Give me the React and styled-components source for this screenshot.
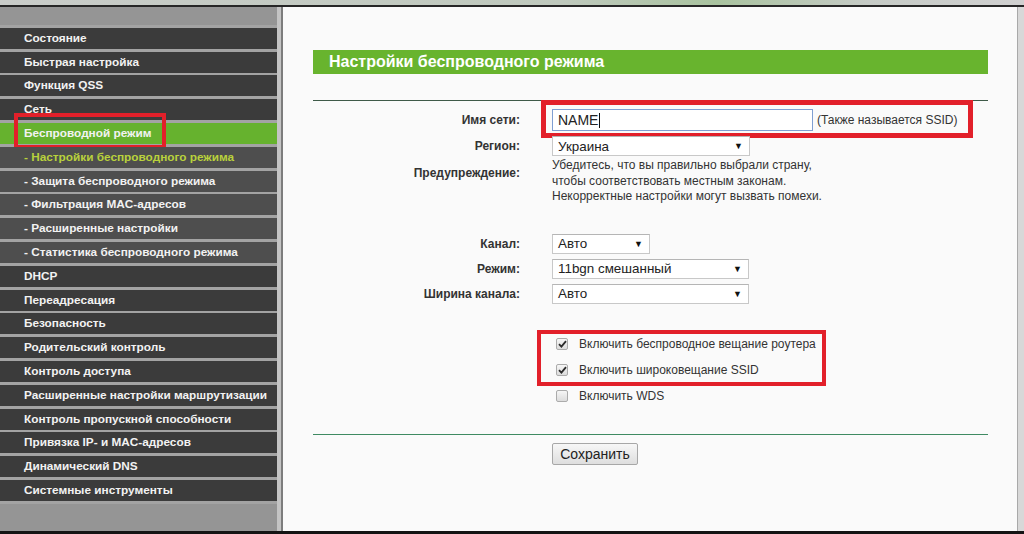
import React from 'react';
import styled, { createGlobalStyle } from 'styled-components';

const GlobalStyle = createGlobalStyle`
  html, body {
    margin: 0;
    padding: 0;
    width: 1024px;
    height: 534px;
    overflow: hidden;
    background: #fafafa;
    font-family: "Liberation Sans", Arial, sans-serif;
  }
`;

const Frame = styled.div`
  display: flex;
  flex-direction: column;
  width: 1024px;
  height: 534px;
`;

const TopStrip = styled.div`
  height: 5px;
  background: linear-gradient(90deg, #c9ccc9 0%, #bfc9bd 55%, #a9c39f 70%, #c6cbc6 85%, #d0d0d0 100%);
  border-bottom: 2px solid #262626;
`;

const Body = styled.div`
  flex: 1;
  display: flex;
  min-height: 0;
`;

const BottomBar = styled.div`
  height: 3px;
  background: #141414;
`;

const Sidebar = styled.nav`
  width: 277px;
  background: #959595;
  padding-top: 18px;
  box-sizing: border-box;
`;

const Menu = styled.ul`
  list-style: none;
  margin: 0;
  padding: 2.8px 0;
  display: flex;
  flex-direction: column;
  gap: 2.8px;
  background: #a3a3a3;
`;

const MenuItem = styled.li`
  position: relative;
  height: 21px;
  line-height: 21px;
  padding-left: 24px;
  font-size: 11.8px;
  font-weight: bold;
  white-space: nowrap;
  color: ${({ $current }) => ($current ? '#b9d13c' : '#f2f2f2')};
  background: ${({ $active, $sub }) => ($active ? '#66b22e' : $sub ? '#4e4e4e' : '#3b3b3b')};

  ${({ $marked }) =>
    $marked &&
    `
    &::after {
      content: '';
      position: absolute;
      left: 14px;
      top: -10px;
      width: 152px;
      height: 36px;
      box-sizing: border-box;
      border: 4px solid #e2202a;
    }
  `}
`;

const SidebarEdge = styled.div`
  width: 4px;
  background: #c4c4c4;
  border-right: 2px solid #7c7c7c;
`;

const Content = styled.main`
  flex: 1;
  background: #fafafa;
  padding: 43px 29px 0 30px;
  box-sizing: border-box;
`;

const ScrollEdge = styled.div`
  width: 6px;
  background: #d8d8d8;
  border-left: 1px solid #a9a9a9;
`;

const TitleBar = styled.h1`
  margin: 0;
  height: 24px;
  line-height: 24px;
  padding-left: 16px;
  background: #68b42e;
  color: #fff;
  font-size: 16px;
  font-weight: bold;
`;

const Rule = styled.hr`
  margin: ${({ $top }) => $top}px 0 0;
  border: 0;
  border-top: 1px solid ${({ $color }) => $color};
`;

const FormRow = styled.div`
  display: grid;
  grid-template-columns: 207px 1fr;
  column-gap: 32px;
  align-items: ${({ $top }) => ($top ? 'start' : 'center')};
  margin-top: ${({ $gap }) => $gap || 0}px;
  min-height: ${({ $h }) => $h || 20}px;
`;

const Label = styled.div`
  text-align: right;
  font-size: 12px;
  font-weight: bold;
  color: #333;
  padding-top: ${({ $pad }) => $pad || 0}px;
`;

const Cell = styled.div`
  position: relative;
  display: flex;
  align-items: center;

  ${({ $mark }) =>
    $mark &&
    `
    &::after {
      content: '';
      position: absolute;
      left: -11px;
      top: -9px;
      width: 432px;
      height: 38px;
      box-sizing: border-box;
      border: 5px solid #e2202a;
    }
  `}
`;

const TextField = styled.div`
  display: flex;
  align-items: center;
  width: 261px;
  height: 22px;
  box-sizing: border-box;
  border: 1px solid #7f9fd2;
  background: #fff;
  padding-left: 5px;
  font-size: 14px;
  color: #222;
`;

const Caret = styled.span`
  display: inline-block;
  width: 1px;
  height: 15px;
  margin-left: 1px;
  background: #111;
`;

const Hint = styled.span`
  margin-left: 4px;
  font-size: 12px;
  color: #333;
`;

const Select = styled.div`
  display: flex;
  align-items: center;
  justify-content: space-between;
  width: ${({ $w }) => $w}px;
  height: 20px;
  box-sizing: border-box;
  border: 1px solid #c8c8c8;
  border-top-color: #b5b5b5;
  background: #fff;
  padding: 0 6px 0 5px;
  font-size: 13.4px;
  color: #222;
`;

const Arrow = styled.span`
  font-size: 9px;
  color: #111;
`;

const Note = styled.div`
  font-size: 12px;
  line-height: 15.5px;
  color: #333;
`;

const Checks = styled.div`
  display: flex;
  flex-direction: column;
  gap: 6px;
`;

const CheckGroup = styled.div`
  position: relative;
  display: flex;
  flex-direction: column;
  gap: 6px;

  &::after {
    content: '';
    position: absolute;
    left: -15px;
    top: -4px;
    width: 289px;
    height: 56px;
    box-sizing: border-box;
    border: 4px solid #e2202a;
  }
`;

const CheckRow = styled.label`
  display: flex;
  align-items: center;
  height: 20px;
  padding-left: 4px;
  font-size: 12px;
  color: #333;
`;

const Box = styled.span`
  display: inline-flex;
  align-items: center;
  justify-content: center;
  width: 12px;
  height: 12px;
  box-sizing: border-box;
  margin-right: 11px;
  border: 1px solid #ababab;
  border-radius: 2px;
  background: linear-gradient(#f6f6f6, #dcdcdc);
`;

const SaveButton = styled.button`
  width: 86px;
  height: 22px;
  padding: 0;
  border: 1px solid #a7a7a7;
  border-radius: 2px;
  background: linear-gradient(#f7f7f7, #dedede);
  font-family: "Liberation Sans", Arial, sans-serif;
  font-size: 14px;
  color: #222;
`;

const Check = ({ checked, children }) => (
  <CheckRow>
    <Box>
      {checked && (
        <svg width="9" height="8" viewBox="0 0 9 8">
          <path d="M1 4.2 L3.4 6.6 L8 1.2" fill="none" stroke="#2b2b2b" strokeWidth="1.8" />
        </svg>
      )}
    </Box>
    {children}
  </CheckRow>
);

const menu = [
  { text: 'Состояние' },
  { text: 'Быстрая настройка' },
  { text: 'Функция QSS' },
  { text: 'Сеть' },
  { text: 'Беспроводной режим', active: true, marked: true },
  { text: '- Настройки беспроводного режима', sub: true, current: true },
  { text: '- Защита беспроводного режима', sub: true },
  { text: '- Фильтрация MAC-адресов', sub: true },
  { text: '- Расширенные настройки', sub: true },
  { text: '- Статистика беспроводного режима', sub: true },
  { text: 'DHCP' },
  { text: 'Переадресация' },
  { text: 'Безопасность' },
  { text: 'Родительский контроль' },
  { text: 'Контроль доступа' },
  { text: 'Расширенные настройки маршрутизации' },
  { text: 'Контроль пропускной способности' },
  { text: 'Привязка IP- и MAC-адресов' },
  { text: 'Динамический DNS' },
  { text: 'Системные инструменты' },
];

export default function App() {
  return (
    <>
      <GlobalStyle />
      <Frame>
        <TopStrip />
        <Body>
          <Sidebar>
            <Menu>
              {menu.map((item) => (
                <MenuItem
                  key={item.text}
                  $active={item.active}
                  $sub={item.sub}
                  $current={item.current}
                  $marked={item.marked}
                >
                  {item.text}
                </MenuItem>
              ))}
            </Menu>
          </Sidebar>
          <SidebarEdge />

          <Content>
            <TitleBar>Настройки беспроводного режима</TitleBar>
            <Rule $top={26} $color="#3e5a48" />

            <FormRow $gap={8} $h={22}>
              <Label>Имя сети:</Label>
              <Cell $mark>
                <TextField>
                  NAME
                  <Caret />
                </TextField>
                <Hint>(Также называется SSID)</Hint>
              </Cell>
            </FormRow>

            <FormRow $gap={5}>
              <Label>Регион:</Label>
              <Cell>
                <Select $w={198}>
                  Украина <Arrow>▼</Arrow>
                </Select>
              </Cell>
            </FormRow>

            <FormRow $gap={2} $top>
              <Label $pad={8}>Предупреждение:</Label>
              <Note>
                Убедитесь, что вы правильно выбрали страну,
                <br />
                чтобы соответствовать местным законам.
                <br />
                Некорректные настройки могут вызвать помехи.
              </Note>
            </FormRow>

            <FormRow $gap={29}>
              <Label>Канал:</Label>
              <Cell>
                <Select $w={98}>
                  Авто <Arrow>▼</Arrow>
                </Select>
              </Cell>
            </FormRow>

            <FormRow $gap={5}>
              <Label>Режим:</Label>
              <Cell>
                <Select $w={197}>
                  11bgn смешанный <Arrow>▼</Arrow>
                </Select>
              </Cell>
            </FormRow>

            <FormRow $gap={5}>
              <Label>Ширина канала:</Label>
              <Cell>
                <Select $w={197}>
                  Авто <Arrow>▼</Arrow>
                </Select>
              </Cell>
            </FormRow>

            <FormRow $gap={30}>
              <div />
              <Checks>
                <CheckGroup>
                  <Check checked>Включить беспроводное вещание роутера</Check>
                  <Check checked>Включить широковещание SSID</Check>
                </CheckGroup>
                <Check>Включить WDS</Check>
              </Checks>
            </FormRow>

            <Rule $top={28} $color="#3f8a62" />

            <FormRow $gap={8} $h={22}>
              <div />
              <Cell>
                <SaveButton>Сохранить</SaveButton>
              </Cell>
            </FormRow>
          </Content>
          <ScrollEdge />
        </Body>
        <BottomBar />
      </Frame>
    </>
  );
}
